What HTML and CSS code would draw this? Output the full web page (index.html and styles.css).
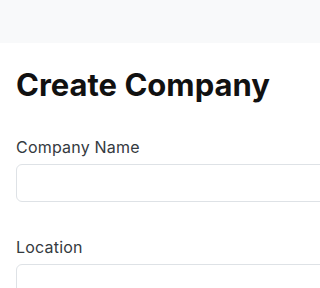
FILE: index.html
```html
<!DOCTYPE html>
<html lang="en">
<head>
<meta charset="utf-8">
<title>Create Company</title>
<link rel="stylesheet" href="styles.css">
</head>
<body>
<header class="topbar"></header>
<main class="page">
  <h1 class="title">Create Company</h1>
  <form class="form">
    <div class="field">
      <label class="label" for="name">Company Name</label>
      <input class="input" id="name" type="text">
    </div>
    <div class="field">
      <label class="label" for="loc">Location</label>
      <input class="input" id="loc" type="text">
    </div>
  </form>
</main>
</body>
</html>
```
FILE: styles.css
```css
html, body {
  margin: 0;
  padding: 0;
  background: #ffffff;
  font-family: Inter, "Noto Sans", sans-serif;
}
.topbar {
  height: 43px;
  background: #f8f9fa;
}
.page {
  padding: 0 0 0 16px;
  overflow: hidden;
}
.title {
  margin: 24px 0 32px;
  font-size: 31px;
  line-height: 36px;
  font-weight: 700;
  color: #111111;
  white-space: nowrap;
}
.form {
  display: flex;
  flex-direction: column;
  gap: 33px;
  width: 320px;
}
.field {
  display: flex;
  flex-direction: column;
}
.label {
  font-size: 16px;
  line-height: 24px;
  color: #343a40;
  margin-bottom: 5px;
  letter-spacing: 0.2px;
}
.input {
  box-sizing: border-box;
  height: 38px;
  width: 100%;
  border: 1px solid #dee2e6;
  border-radius: 6px;
  padding: 6px 12px;
  font: inherit;
  background: #fff;
}
```
